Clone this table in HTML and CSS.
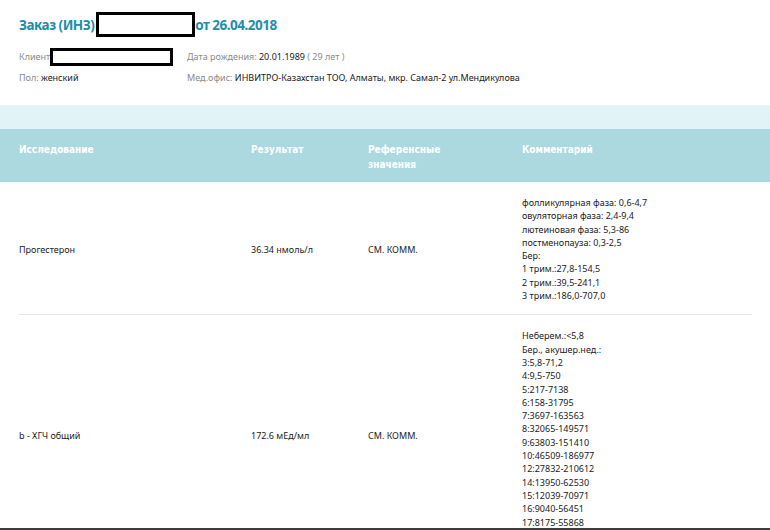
FILE: index.html
```html
<!DOCTYPE html>
<html lang="ru">
<head>
<meta charset="utf-8">
<title>Заказ</title>
<link rel="stylesheet" href="styles.css">
</head>
<body>
<div class="top">
  <h1 class="title">Заказ (ИНЗ)<span class="redact redact-title"></span>от 26.04.2018</h1>
  <div class="info">
    <div class="info-item"><span class="lbl">Клиент</span><span class="redact redact-client"></span></div>
    <div class="info-item"><span class="lbl">Дата рождения:</span> <span class="val">20.01.1989</span> <span class="lbl">( 29 лет )</span></div>
    <div class="info-item"><span class="lbl">Пол:</span> <span class="val">женский</span></div>
    <div class="info-item"><span class="lbl">Мед.офис:</span> <span class="val">ИНВИТРО-Казахстан ТОО, Алматы, мкр. Самал-2 ул.Мендикулова</span></div>
  </div>
</div>
<div class="band"></div>
<div class="thead">
  <div>Исследование</div>
  <div>Результат</div>
  <div>Референсные<br>значения</div>
  <div>Комментарий</div>
</div>
<div class="tbody">
  <div class="row">
    <div>Прогестерон</div>
    <div>36.34 нмоль/л</div>
    <div>СМ. КОММ.</div>
    <div class="comment">фолликулярная фаза: 0,6-4,7<br>овуляторная фаза: 2,4-9,4<br>лютеиновая фаза: 5,3-86<br>постменопауза: 0,3-2,5<br>Бер:<br>1 трим.:27,8-154,5<br>2 трим.:39,5-241,1<br>3 трим.:186,0-707,0</div>
  </div>
  <div class="row">
    <div>b - ХГЧ общий</div>
    <div>172.6 мЕд/мл</div>
    <div>СМ. КОММ.</div>
    <div class="comment">Неберем.:&lt;5,8<br>Бер., акушер.нед.:<br>3:5,8-71,2<br>4:9,5-750<br>5:217-7138<br>6:158-31795<br>7:3697-163563<br>8:32065-149571<br>9:63803-151410<br>10:46509-186977<br>12:27832-210612<br>14:13950-62530<br>15:12039-70971<br>16:9040-56451<br>17:8175-55868<br>18:8099-58176</div>
  </div>
</div>
<div class="edge"></div>
</body>
</html>
```
FILE: styles.css
```css
html, body {
  margin: 0;
  padding: 0;
  background: #ffffff;
}
body {
  font-family: "Noto Sans", "Open Sans", sans-serif;
  font-size: 9px;
  color: #222222;
  overflow: hidden;
  height: 530px;
}
.top {
  padding: 12px 18px 0 19px;
}
.title {
  margin: 0;
  display: flex;
  align-items: center;
  height: 25px;
  font-size: 13.5px;
  letter-spacing: -0.5px;
  font-weight: 700;
  color: #1e8fa7;
  white-space: nowrap;
}
.redact {
  display: inline-block;
  box-sizing: border-box;
  border: 3px solid #000000;
  background: #ffffff;
  vertical-align: middle;
}
.redact-title {
  width: 99px;
  height: 25px;
  margin-left: 2px;
}
.info {
  display: grid;
  grid-template-columns: 168px 1fr;
  grid-auto-rows: 18px;
  row-gap: 3px;
  margin-top: 11px;
}
.info-item {
  line-height: 18px;
  white-space: nowrap;
}
.lbl {
  color: #8a8a8a;
}
.val {
  color: #222222;
}
.redact-client {
  width: 123px;
  height: 18px;
  vertical-align: top;
}
.band {
  margin-top: 18px;
  height: 24px;
  background: #e2f3f7;
}
.thead {
  display: grid;
  grid-template-columns: 232px 117px 154px 1fr;
  height: 53px;
  box-sizing: border-box;
  padding: 13px 18px 0 19px;
  background: #acd9df;
  color: #ffffff;
  font-family: "DejaVu Sans Condensed", "DejaVu Sans", sans-serif;
  font-weight: 700;
  font-size: 10px;
  line-height: 15px;
}
.tbody {
  margin: 0 18px 0 19px;
}
.row {
  display: grid;
  grid-template-columns: 232px 117px 154px 1fr;
  align-items: center;
  padding: 14px 0 12px;
  border-bottom: 1px solid #e6e6e6;
}
.comment {
  line-height: 13.3px;
  white-space: nowrap;
}
.edge {
  position: fixed;
  left: 0;
  right: 0;
  bottom: 0;
  height: 2px;
  background: #3d3d3d;
}
```
